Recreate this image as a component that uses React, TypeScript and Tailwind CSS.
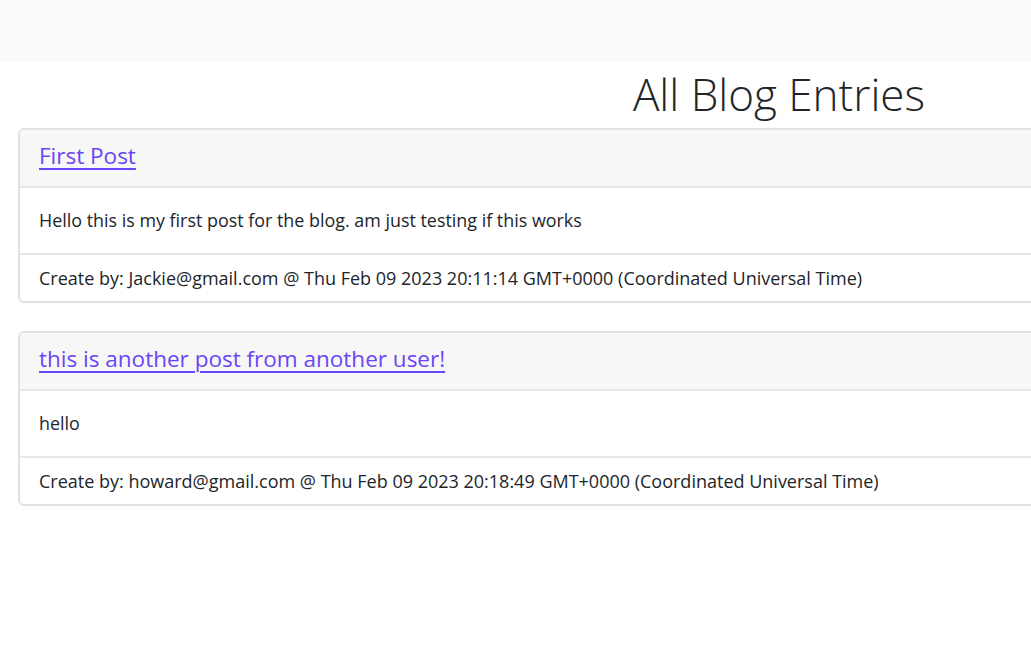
const posts = [
  {
    title: "First Post",
    body: "Hello this is my first post for the blog. am just testing if this works",
    author: "Jackie@gmail.com",
    date: "Thu Feb 09 2023 20:11:14 GMT+0000 (Coordinated Universal Time)",
  },
  {
    title: "this is another post from another user!",
    body: "hello",
    author: "howard@gmail.com",
    date: "Thu Feb 09 2023 20:18:49 GMT+0000 (Coordinated Universal Time)",
  },
];

export default function App() {
  return (
    <div className="min-h-screen bg-white overflow-hidden text-[#212529] [font-family:'Open_Sans',sans-serif]">
      <nav className="h-[62px] bg-[#f8f9fa]"></nav>

      <div className="w-[1522px] ml-[18px]">
        <h1 className="text-center text-[44px] font-light leading-[64px] text-[#212529]">
          All Blog Entries
        </h1>

        <div className="flex flex-col gap-[28px] mt-[2px]">
          {posts.map((post) => (
            <div
              key={post.title}
              className="border-2 border-[#e1e1e5] rounded-[6px] overflow-hidden bg-white"
            >
              <div className="h-[58px] px-[19px] pb-[4px] flex items-center bg-[#f7f7f7] border-b-2 border-[#e6e6ea]">
                <a
                  href="#"
                  className="text-[22.5px] font-medium underline underline-offset-[4px] decoration-[1.5px] text-[#6a45f5]"
                >
                  {post.title}
                </a>
              </div>
              <div className="h-[65px] px-[19px] flex items-center text-[17.9px]">
                {post.body}
              </div>
              <div className="h-[48px] px-[19px] flex items-center text-[18px] border-t-2 border-[#e6e6ea]">
                Create by: {post.author} @ {post.date}
              </div>
            </div>
          ))}
        </div>
      </div>
    </div>
  );
}
